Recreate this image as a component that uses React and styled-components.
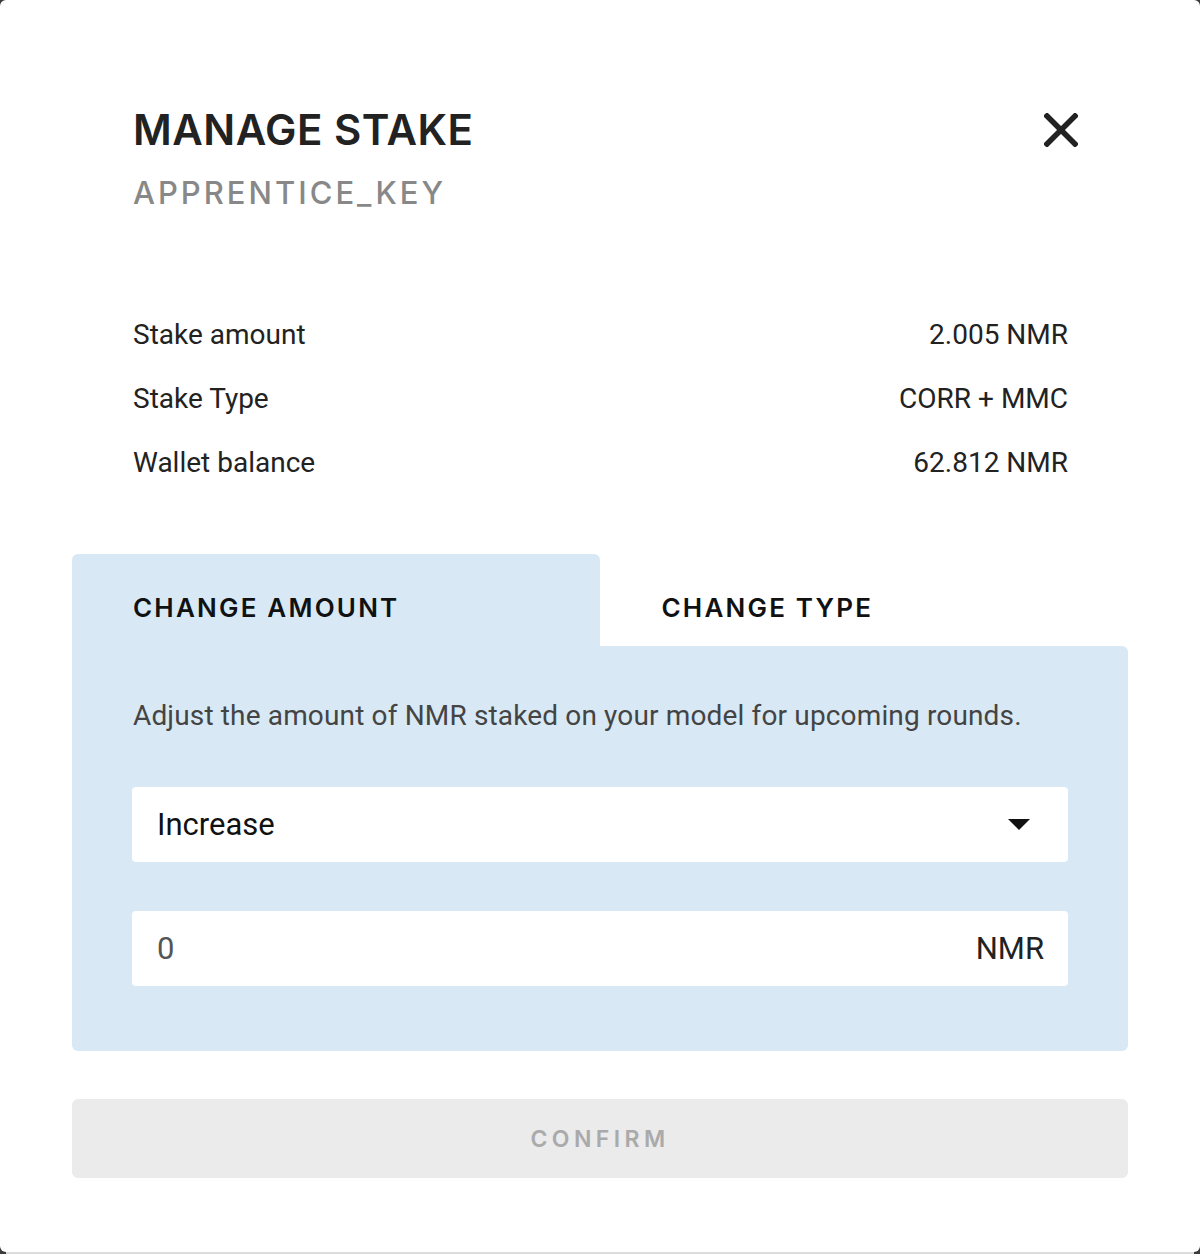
import React, { useState } from 'react';
import styled, { createGlobalStyle } from 'styled-components';

const GlobalStyle = createGlobalStyle`
  html, body {
    margin: 0;
    padding: 0;
    background: #dcdcdc;
  }
  body {
    font-family: Roboto, "Liberation Sans", sans-serif;
    -webkit-font-smoothing: antialiased;
  }
`;

const Backdrop = styled.div`
  width: 1200px;
  height: 1254px;
  background: #3b3b3b;
  display: flex;
  flex-direction: column;
`;

const Modal = styled.div`
  width: 1200px;
  height: 1252px;
  box-sizing: border-box;
  background: #fff;
  border-radius: 6px;
  padding: 0 72px;
  display: flex;
  flex-direction: column;
`;

const Strip = styled.div`
  height: 2px;
  background: #dcdcdc;
  margin: 0 6px;
`;

const Header = styled.header`
  display: flex;
  justify-content: space-between;
  align-items: flex-start;
  padding: 106px 50px 0 61px;
`;

const Titles = styled.div`
  display: flex;
  flex-direction: column;
  gap: 22px;
`;

const Title = styled.h1`
  margin: 0;
  font-family: Inter, "Liberation Sans", sans-serif;
  font-size: 42px;
  line-height: 48px;
  font-weight: 600;
  letter-spacing: 0.5px;
  color: #222;
`;

const Subtitle = styled.h2`
  margin: 0;
  font-family: Inter, "Liberation Sans", sans-serif;
  font-size: 31px;
  line-height: 34px;
  font-weight: 500;
  letter-spacing: 3px;
  color: #888;
`;

const CloseButton = styled.button`
  border: 0;
  background: none;
  padding: 0;
  margin-top: 7px;
  width: 34px;
  height: 34px;
  cursor: pointer;
`;

const InfoList = styled.dl`
  margin: 107px 0 0;
  padding: 0 60px 0 61px;
  display: flex;
  flex-direction: column;
  gap: 28px;
`;

const InfoRow = styled.div`
  display: flex;
  justify-content: space-between;
  font-size: 28px;
  line-height: 36px;
  color: #222;
`;

const Term = styled.dt``;
const Value = styled.dd`
  margin: 0;
`;

const Tabs = styled.div`
  margin-top: 73px;
  display: flex;
`;

const Tab = styled.button`
  flex: 1;
  height: 92px;
  border: 0;
  border-radius: 6px 6px 0 0;
  background: ${(p) => (p.active ? '#d8e9f5' : '#fff')};
  text-align: left;
  align-self: flex-start;
  padding: 38px 0 0 ${(p) => (p.active ? 61 : 62)}px;
  display: flex;
  align-items: flex-start;
  font-family: Inter, "Liberation Sans", sans-serif;
  font-size: 26px;
  line-height: 32px;
  font-weight: 600;
  letter-spacing: 2.2px;
  color: #111;
  cursor: pointer;
`;

const Panel = styled.section`
  background: #d8e9f5;
  border-radius: 0 6px 6px 6px;
  padding: 53px 60px 65px;
  display: flex;
  flex-direction: column;
`;

const Description = styled.p`
  margin: 0 0 0 1px;
  font-size: 28px;
  line-height: 34px;
  letter-spacing: 0.15px;
  color: #444;
`;

const Field = styled.div`
  height: 75px;
  margin-top: ${(p) => p.top}px;
  background: #fff;
  border-radius: 4px;
  display: flex;
  align-items: center;
  justify-content: space-between;
  padding: 0 24px 0 25px;
  font-size: 31px;
  color: ${(p) => (p.muted ? '#555' : '#111')};
`;

const Unit = styled.span`
  color: #222;
`;

const Caret = styled.span`
  width: 0;
  height: 0;
  margin-right: 14px;
  border-left: 11px solid transparent;
  border-right: 11px solid transparent;
  border-top: 11px solid #111;
`;

const Confirm = styled.button`
  margin-top: 48px;
  height: 79px;
  border: 0;
  border-radius: 6px;
  background: #ebebeb;
  font-family: Inter, "Liberation Sans", sans-serif;
  font-size: 23px;
  font-weight: 600;
  letter-spacing: 4.4px;
  color: #aaa;
`;

const rows = [
  ['Stake amount', '2.005 NMR'],
  ['Stake Type', 'CORR + MMC'],
  ['Wallet balance', '62.812 NMR'],
];

const App = () => {
  const [tab, setTab] = useState('amount');

  return (
    <>
      <GlobalStyle />
      <Backdrop>
        <Modal>
          <Header>
            <Titles>
              <Title>MANAGE STAKE</Title>
              <Subtitle>APPRENTICE_KEY</Subtitle>
            </Titles>
            <CloseButton aria-label="Close">
              <svg width="34" height="34" viewBox="0 0 34 34">
                <path
                  d="M3 3 L31 31 M31 3 L3 31"
                  stroke="#222"
                  strokeWidth="5.5"
                  strokeLinecap="square"
                />
              </svg>
            </CloseButton>
          </Header>

          <InfoList>
            {rows.map(([label, value]) => (
              <InfoRow key={label}>
                <Term>{label}</Term>
                <Value>{value}</Value>
              </InfoRow>
            ))}
          </InfoList>

          <Tabs>
            <Tab active={tab === 'amount'} onClick={() => setTab('amount')}>
              CHANGE AMOUNT
            </Tab>
            <Tab active={tab === 'type'} onClick={() => setTab('type')}>
              CHANGE TYPE
            </Tab>
          </Tabs>
          <Panel>
            <Description>
              Adjust the amount of NMR staked on your model for upcoming rounds.
            </Description>
            <Field top={54}>
              <span>Increase</span>
              <Caret />
            </Field>
            <Field top={49} muted>
              <span>0</span>
              <Unit>NMR</Unit>
            </Field>
          </Panel>

          <Confirm disabled>CONFIRM</Confirm>
        </Modal>
        <Strip />
      </Backdrop>
    </>
  );
};

export default App;
